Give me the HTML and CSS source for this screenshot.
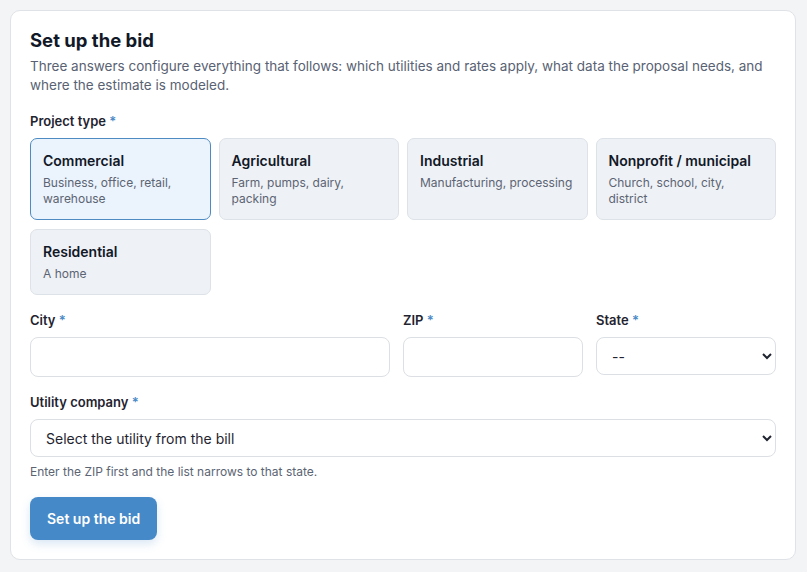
FILE: index.html
```html
<!DOCTYPE html>
<html>
<head>
  <title>Set up the bid</title>
  <link rel="stylesheet" href="styles.css">
</head>
<body>
  <form class="panel">
    <h1 class="title">Set up the bid</h1>
    <p class="intro">Three answers configure everything that follows: which utilities and rates apply, what data the proposal needs, and where the estimate is modeled.</p>

    <div class="label">Project type <span class="req">*</span></div>
    <div class="types">
      <button type="button" class="type selected">
        <span class="type-name">Commercial</span>
        <span class="type-desc">Business, office, retail, warehouse</span>
      </button>
      <button type="button" class="type">
        <span class="type-name">Agricultural</span>
        <span class="type-desc">Farm, pumps, dairy, packing</span>
      </button>
      <button type="button" class="type">
        <span class="type-name">Industrial</span>
        <span class="type-desc">Manufacturing, processing</span>
      </button>
      <button type="button" class="type">
        <span class="type-name">Nonprofit / municipal</span>
        <span class="type-desc">Church, school, city, district</span>
      </button>
      <button type="button" class="type">
        <span class="type-name">Residential</span>
        <span class="type-desc">A home</span>
      </button>
    </div>

    <div class="place">
      <div class="field">
        <label class="label">City <span class="req">*</span></label>
        <input type="text" class="input">
      </div>
      <div class="field">
        <label class="label">ZIP <span class="req">*</span></label>
        <input type="text" class="input">
      </div>
      <div class="field">
        <label class="label">State <span class="req">*</span></label>
        <select class="select"><option>--</option></select>
      </div>
    </div>

    <div class="field utility">
      <label class="label">Utility company <span class="req">*</span></label>
      <select class="select"><option>Select the utility from the bill</option></select>
      <p class="hint">Enter the ZIP first and the list narrows to that state.</p>
    </div>

    <button type="submit" class="submit">Set up the bid</button>
  </form>
</body>
</html>
```

FILE: styles.css
```css
body {
  margin: 0;
  padding: 10px 11px 12px 10px;
  background: #f3f4f6;
  font-family: Inter, "Noto Sans", sans-serif;
  color: #1f2430;
}
.panel {
  background: #ffffff;
  border: 1px solid #dfe2e7;
  border-radius: 10px;
  padding: 18px 19px 19px;
}
.title {
  margin: 0;
  font-size: 18.5px;
  font-weight: 700;
  line-height: 22px;
  color: #111827;
}
.intro {
  margin: 6px 0 0;
  font-size: 13.5px;
  line-height: 19px;
  color: #596273;
}
.label {
  display: block;
  font-size: 13px;
  font-weight: 600;
  line-height: 16px;
  color: #1f2430;
  margin: 18px 0 9px;
}
.req {
  color: #4a8ac6;
}
.types {
  display: grid;
  grid-template-columns: repeat(4, minmax(0, 1fr));
  gap: 9px 8px;
}
.type {
  display: flex;
  flex-direction: column;
  align-items: flex-start;
  text-align: left;
  font-family: inherit;
  background: #eef1f5;
  border: 1px solid #dde2e8;
  border-radius: 7px;
  padding: 12px;
  cursor: pointer;
}
.type.selected {
  background: #ebf3fc;
  border-color: #4d8bc2;
}
.type-name {
  font-size: 14px;
  font-weight: 600;
  line-height: 20px;
  color: #111827;
}
.type-desc {
  margin-top: 4px;
  font-size: 12px;
  line-height: 16px;
  color: #5c6473;
}
.place {
  display: grid;
  grid-template-columns: minmax(0, 2fr) minmax(0, 1fr) minmax(0, 1fr);
  gap: 13px;
  margin-top: 17px;
}
.place .label {
  margin: 0 0 9px;
}
.field {
  display: flex;
  flex-direction: column;
  min-width: 0;
}
.input {
  width: 100%;
  height: 40px;
  box-sizing: border-box;
  border: 1px solid #dcdfe4;
  border-radius: 8px;
  padding: 0 12px;
  font-family: inherit;
  font-size: 14px;
  background: #ffffff;
}
.select {
  width: 100%;
  height: 38px;
  box-sizing: border-box;
  border: 1px solid #dcdfe4;
  border-radius: 8px;
  padding: 0 11px;
  font-family: inherit;
  font-size: 14px;
  color: #1f2430;
  background: #ffffff;
}
.utility {
  margin-top: 17px;
}
.utility .label {
  margin: 0 0 9px;
}
.hint {
  margin: 7px 0 0;
  font-size: 12px;
  line-height: 16px;
  color: #5c6473;
}
.submit {
  margin-top: 17px;
  height: 43px;
  padding: 0 17px;
  border: none;
  border-radius: 8px;
  background: #4589c8;
  color: #ffffff;
  font-family: inherit;
  font-size: 14px;
  font-weight: 600;
  box-shadow: 0 4px 10px rgba(69, 137, 200, 0.2);
  cursor: pointer;
}
```
